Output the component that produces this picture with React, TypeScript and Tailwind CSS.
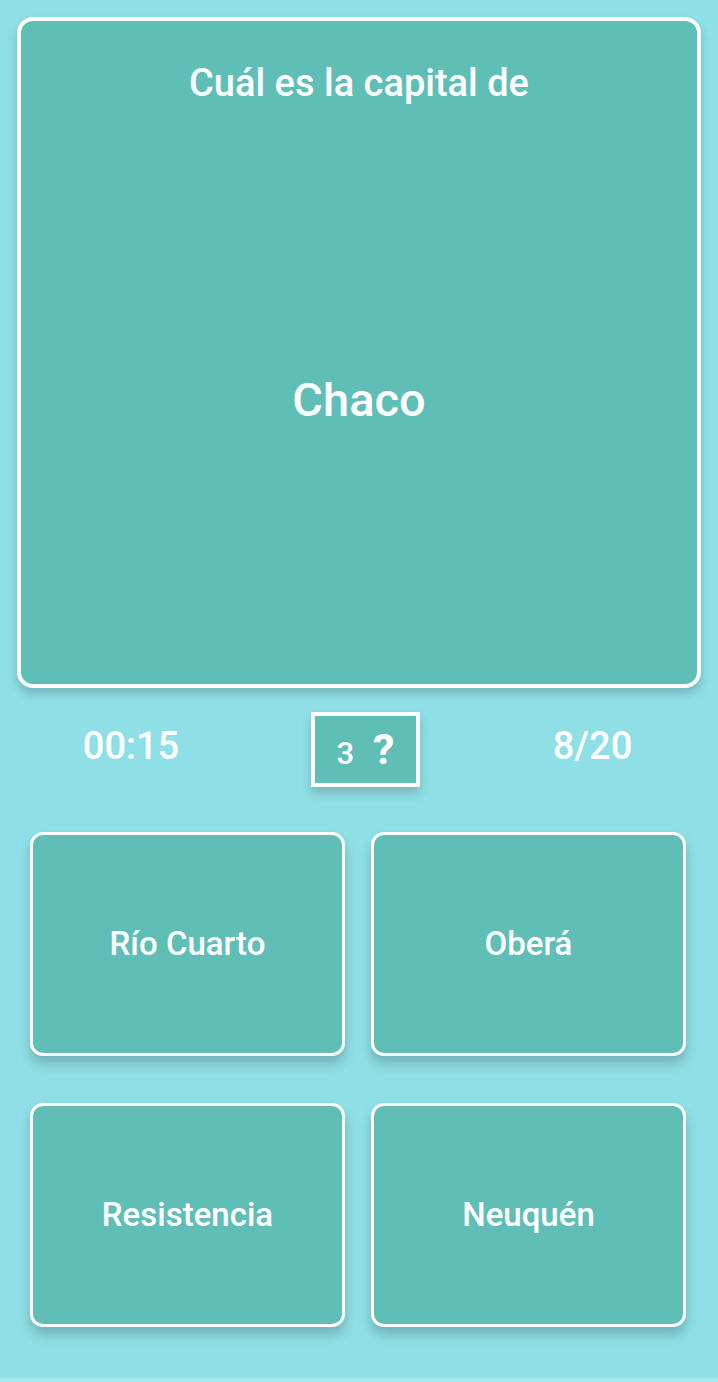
export default function App() {
  const answers = ["Río Cuarto", "Oberá", "Resistencia", "Neuquén"];

  return (
    <div
      className="w-[718px] h-[1382px] flex flex-col bg-[#8ee0e6] text-white"
      style={{ fontFamily: "Roboto, 'Liberation Sans', sans-serif" }}
    >
      {/* Question card */}
      <div className="px-[17px] pt-[17px]">
        <div className="h-[671px] flex flex-col rounded-[16px] border-[4px] border-white bg-[#5fbfb7] shadow-[0_6px_10px_rgba(0,0,0,0.18)]">
          <div className="pt-[40px] text-center text-[38px] font-medium leading-[45px]">
            Cuál es la capital de
          </div>
          <div className="flex-1 flex items-center justify-center pt-[10px] text-[47px] font-medium">
            Chaco
          </div>
        </div>
      </div>

      {/* Status row */}
      <div className="mt-[24px] h-[75px] flex items-center">
        <div className="w-[262px] text-center text-[38px] font-medium leading-none">
          <span className="relative -top-[4px]">00:15</span>
        </div>
        <div className="w-[109px] h-[75px] ml-[49px] flex items-center justify-center gap-[17px] border-[4px] border-white bg-[#5fbfb7] shadow-[0_6px_10px_rgba(0,0,0,0.18)]">
          <span className="text-[31px] font-medium leading-none mt-[8px] mr-[2px]">3</span>
          <span className="text-[43px] font-bold leading-none">?</span>
        </div>
        <div className="flex-1 pl-[47px] text-center text-[38px] font-medium leading-none">
          <span className="relative -top-[4px]">8/20</span>
        </div>
      </div>

      {/* Answers */}
      <div className="mt-[45px] pl-[30px] pr-[32px] grid grid-cols-2 gap-x-[26px] gap-y-[47px]">
        {answers.map((a) => (
          <div
            key={a}
            className="h-[224px] flex items-center justify-center rounded-[13px] border-[3px] border-white bg-[#5fbfb7] text-[33px] font-medium shadow-[0_8px_12px_rgba(0,0,0,0.2)]"
          >
            {a}
          </div>
        ))}
      </div>

      <div className="flex-1" />
      <div className="h-[4px] bg-[#a6e8ec]" />
    </div>
  );
}
